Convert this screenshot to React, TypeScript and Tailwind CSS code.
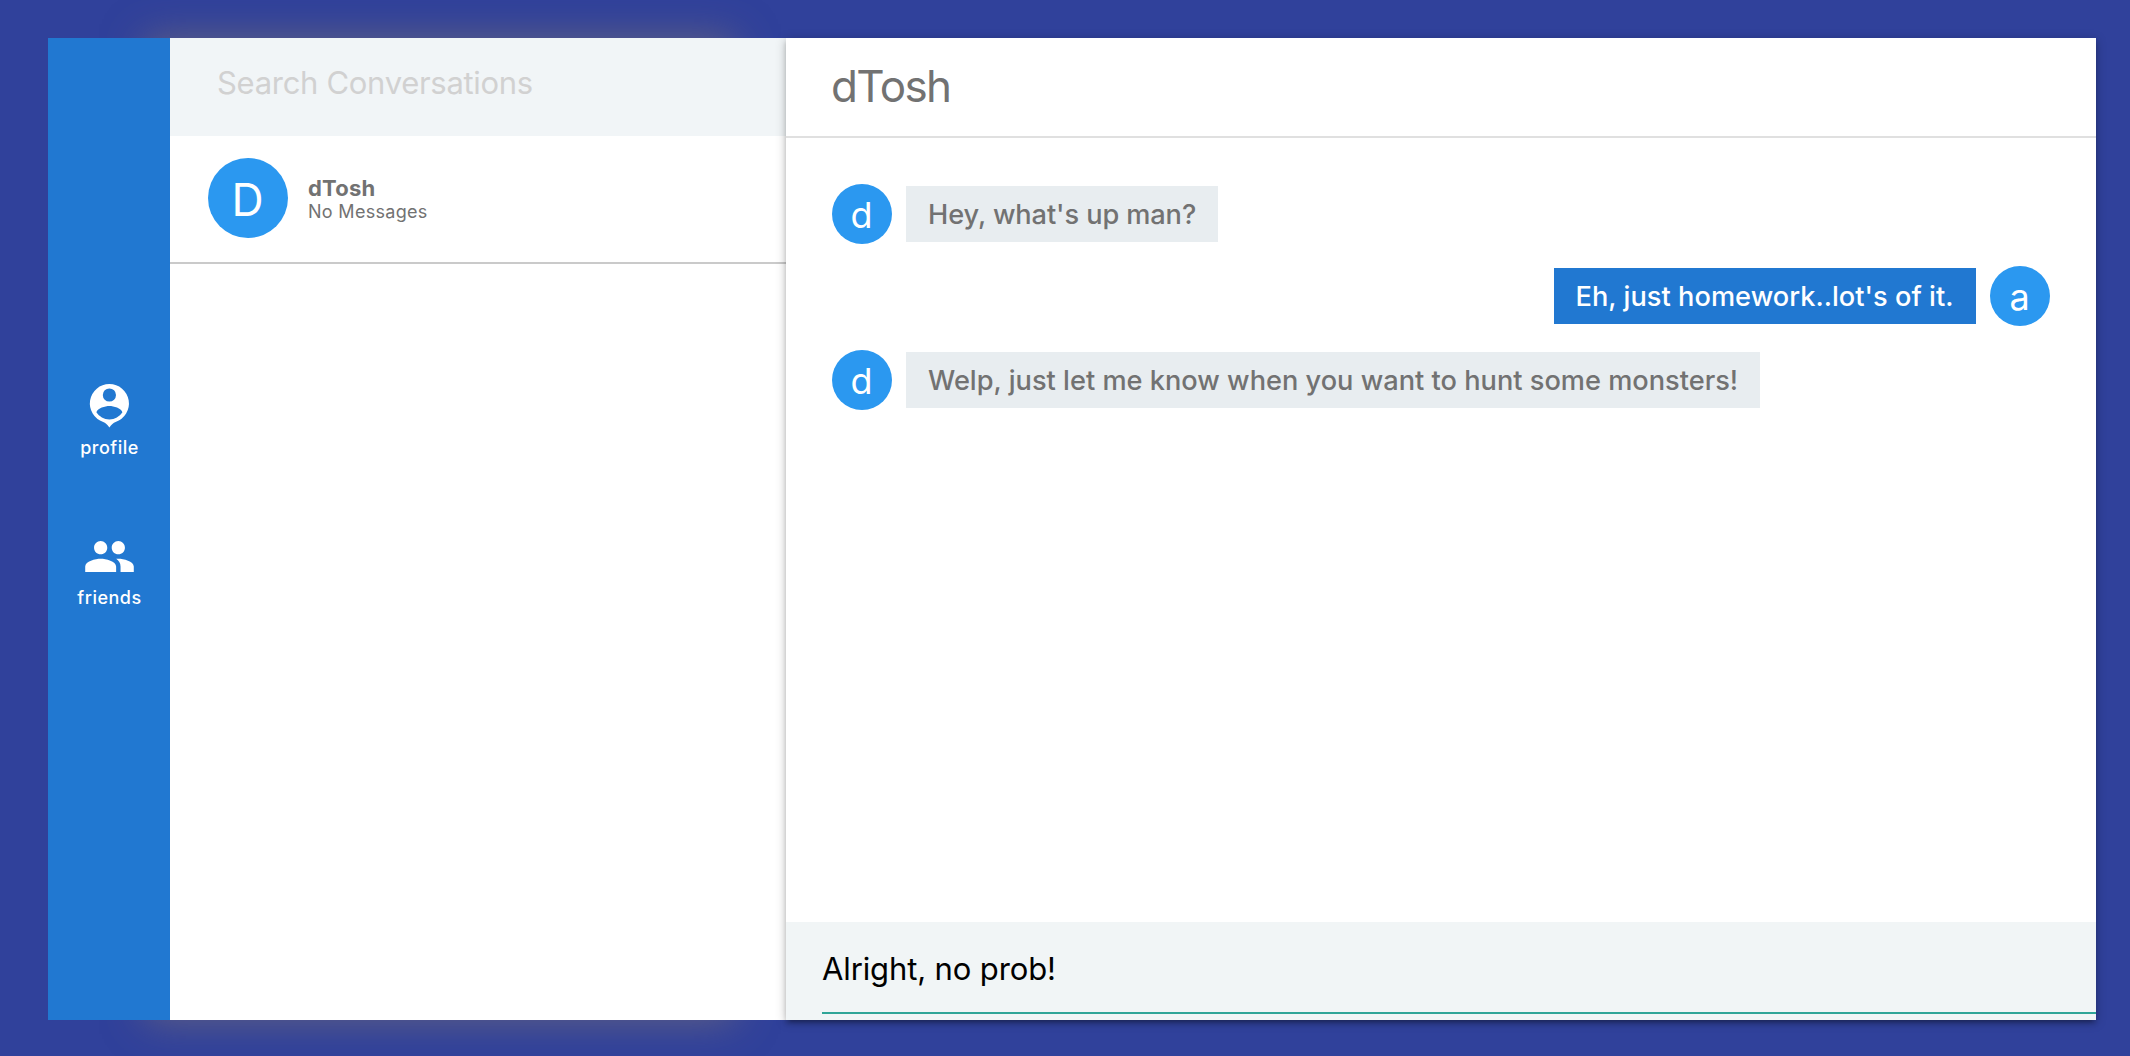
import type { ReactNode } from "react";

function RailItem({ label, children }: { label: string; children: ReactNode }) {
  return (
    <a className="flex h-[150px] w-full flex-col items-center text-white">
      <div className="h-12 w-12">{children}</div>
      <span className="mt-2 ml-px text-[18px] leading-6 font-medium tracking-[0.5px]">{label}</span>
    </a>
  );
}

function Rail() {
  return (
    <nav className="flex w-[122px] shrink-0 flex-col items-center bg-[#2178d1] pt-[342px]">
      <RailItem label="profile">
        <svg viewBox="0 0 24 24" fill="currentColor" className="h-12 w-12">
          <path
            fillRule="evenodd"
            d="M12.200 2a9.750 9.750 0 0 1 3.100 19c-1.100.4-2.100 1.400-3.100 2.700-1-1.300-2-2.300-3.100-2.700A9.750 9.750 0 0 1 12.200 2zM12.200 4.200a3.300 3.300 0 1 0 0 6.600a3.300 3.300 0 0 0 0-6.600zM12.200 19.700c-2.700 0-5.100-1.500-6.500-3.600.6-2 4.350-3.050 6.500-3.050s5.900 1.050 6.500 3.050c-1.400 2.100-3.800 3.600-6.500 3.600z"
          />
        </svg>
      </RailItem>
      <RailItem label="friends">
        <svg viewBox="0 0 24 24" fill="currentColor" className="-ml-[2px] h-[53px] w-[53px]">
          <path d="M16 11c1.660 0 2.990-1.340 2.990-3S17.660 5 16 5c-1.660 0-3 1.340-3 3s1.340 3 3 3zm-8 0c1.660 0 2.990-1.340 2.990-3S9.660 5 8 5C6.340 5 5 6.340 5 8s1.340 3 3 3zm0 2c-2.330 0-7 1.170-7 3.500V19h14v-2.500c0-2.330-4.670-3.500-7-3.500zm8 0c-.29 0-.62.02-.97.05 1.160.84 1.970 1.970 1.970 3.450V19h6v-2.500c0-2.330-4.670-3.500-7-3.500z" />
        </svg>
      </RailItem>
    </nav>
  );
}

function Conversations() {
  return (
    <aside className="w-[616px] shrink-0 bg-white">
      <div className="h-[98px] bg-[#f1f5f7] pl-[47px]">
        <div className="pt-[21px] text-[31px] leading-[48px] tracking-[-0.3px] text-[#d1d1d1]">Search Conversations</div>
      </div>
      <div className="flex h-[128px] items-start border-b-2 border-[#cacaca] pt-[22px] pl-[38px]">
        <div className="flex h-20 w-20 items-center justify-center rounded-full bg-[#2b98f0] text-[44.5px] leading-none text-white">
          <span className="mt-[4px] ml-[-1px]">D</span>
        </div>
        <div className="mt-[18px] ml-5 text-[#727272]">
          <div className="text-[22px] leading-6 font-bold tracking-[0.2px]">dTosh</div>
          <div className="text-[18px] leading-6 tracking-[0.3px]">No Messages</div>
        </div>
      </div>
    </aside>
  );
}

function Avatar({ letter }: { letter: string }) {
  return (
    <div className="flex h-[60px] w-[60px] shrink-0 items-center justify-center rounded-full bg-[#2b98f0] text-[36px] leading-none font-normal text-white">
      <span className="mt-[2px] -ml-px">{letter}</span>
    </div>
  );
}

function Chat() {
  return (
    <main className="z-10 flex w-[1310px] shrink-0 flex-col bg-white shadow-[0_4px_4px_0_rgba(0,0,0,0.14),0_6px_2px_-4px_rgba(0,0,0,0.12),0_2px_10px_0_rgba(0,0,0,0.26)]">
      <header className="h-[100px] border-b-2 border-[#e0e0e0] pt-[18px] pl-[45px] text-[44px] leading-[60px] tracking-[-1.6px] text-[#727272]">
        dTosh
      </header>
      <section className="flex flex-1 flex-col px-[46px] pt-[46px] text-[27.2px] leading-[58px] font-medium">
        <div className="flex items-center gap-[14px]">
          <Avatar letter="d" />
          <div className="h-14 w-[312px] bg-[#e8edf0] pl-[22px] tracking-[-0.1px] whitespace-nowrap text-[#727272]">
            Hey, what's up man?
          </div>
        </div>
        <div className="mt-[22px] flex items-center justify-end gap-[14px]">
          <div className="h-14 w-[422px] bg-[#2178d1] pl-[21.5px] tracking-[0.03px] whitespace-nowrap text-white">
            Eh, just homework..lot's of it.
          </div>
          <Avatar letter="a" />
        </div>
        <div className="mt-[24px] flex items-center gap-[14px]">
          <Avatar letter="d" />
          <div className="h-14 w-[854px] bg-[#e8edf0] pl-[22px] whitespace-nowrap text-[#727272]">
            Welp, just let me know when you want to hunt some monsters!
          </div>
        </div>
      </section>
      <footer className="h-[98px] bg-[#f1f5f6] pl-9">
        <div className="h-[92px] border-b-2 border-[#2fa598] pt-[23px] text-[31px] leading-[48px] tracking-[-0.12px] text-black">
          Alright, no prob!
        </div>
      </footer>
    </main>
  );
}

export default function App() {
  return (
    <div className="h-[1056px] w-[2130px] overflow-hidden bg-[#30419b] pt-[38px] pl-[48px] font-['Inter',sans-serif]">
      <div className="relative isolate flex h-[982px]">
        <div className="absolute inset-y-0 left-[97px] -z-10 w-[590px] shadow-[0_0_38px_0_rgba(144,125,107,0.54)]" />
        <Rail />
        <Conversations />
        <Chat />
      </div>
    </div>
  );
}
